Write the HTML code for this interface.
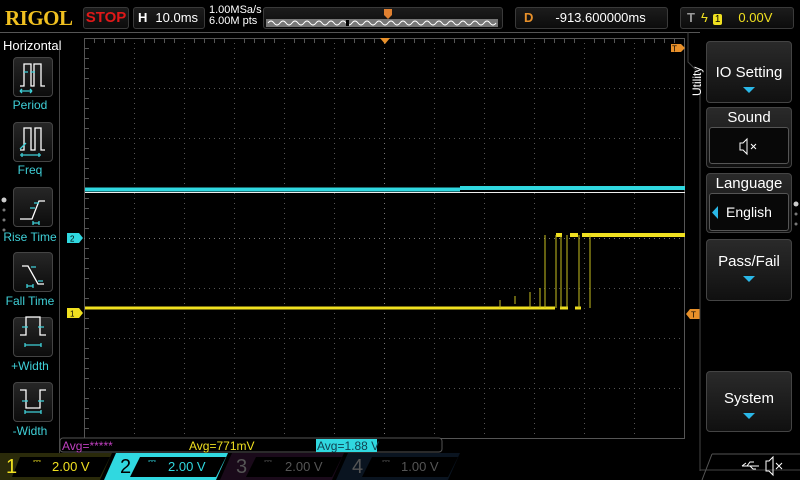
<!DOCTYPE html>
<html><head><meta charset="utf-8"><style>
*{margin:0;padding:0;box-sizing:border-box}
body{width:800px;height:480px;background:#000;overflow:hidden;position:relative;font-family:"Liberation Sans",sans-serif;color:#fff}
.a{position:absolute}
.box{position:absolute;border:1px solid #3a3a3a;border-radius:3px;background:linear-gradient(#1c1c1c,#0c0c0c)}
.lb{position:absolute;color:#3fd0d8;font-size:12px;width:60px;text-align:center;left:0}
.btn{position:absolute;left:13px;width:40px;height:40px;border:1px solid #444;border-radius:4px;background:linear-gradient(#262626,#0c0c0c)}
.rb{position:absolute;left:706px;width:86px;border:1px solid #444;border-radius:4px;background:linear-gradient(#2a2a2a,#101010);text-align:center;font-size:15px}
.tri{width:0;height:0;border-left:6px solid transparent;border-right:6px solid transparent;border-top:6px solid #2ab8e8;margin:6px auto 0}
</style></head><body>
<div class="a" style="left:5px;top:6px;font-family:'Liberation Serif',serif;font-weight:bold;font-size:21px;color:#f0c020;letter-spacing:-0.5px">RIGOL</div>
<div class="box" style="left:83px;top:7px;width:46px;height:22px;color:#e01818;font-weight:bold;font-size:15px;text-align:center;line-height:20px">STOP</div>
<div class="box" style="left:133px;top:7px;width:72px;height:22px;font-size:13px;line-height:20px"><b style="margin-left:4px">H</b><span style="margin-left:8px">10.0ms</span></div>
<div class="a" style="left:209px;top:5px;font-size:11px;line-height:11px">1.00MSa/s<br>6.00M pts</div>
<div class="box" style="left:263px;top:7px;width:240px;height:22px;"></div>
<svg class="a" style="left:266px;top:8px" width="236" height="20"><path d="M118 1h8v6l-4 4-4-4z" fill="#e08030"/><rect x="0" y="11" width="232" height="8" fill="#777"/><path d="M2 15 q3-4 6 0 t6 0 t6 0 t6 0 t6 0 t6 0 t6 0 t6 0 t6 0 t6 0 t6 0 t6 0 t6 0 t6 0 t6 0 t6 0 t6 0 t6 0 t6 0 t6 0 t6 0 t6 0 t6 0 t6 0 t6 0 t6 0 t6 0 t6 0 t6 0 t6 0 t6 0 t6 0 t6 0 t6 0 t6 0 t6 0 t6 0 t6 0" stroke="#fff" fill="none"/><rect x="80" y="12" width="3" height="6" fill="#000"/></svg>
<div class="box" style="left:515px;top:7px;width:153px;height:22px;font-size:13px;line-height:20px"><b style="color:#e8902a;margin-left:8px">D</b><span style="margin-left:22px">-913.600000ms</span></div>
<div class="box" style="left:680px;top:7px;width:114px;height:22px;font-size:13px;line-height:20px"><b style="color:#999;margin-left:6px">T</b><span style="color:#f0e020;margin-left:6px">ϟ</span><span style="background:#f0e020;color:#000;font-size:10px;padding:0 2px;margin-left:5px;border-radius:2px">1</span><span style="color:#f0e020;margin-left:16px">0.00V</span></div>
<div class="a" style="left:0;top:32px;width:700px;height:1px;background:#555"></div>
<div class="a" style="left:3px;top:38px;font-size:13px">Horizontal</div>
<div class="a" style="left:59px;top:50px;width:1px;height:420px;background:#444"></div>
<div class="btn" style="top:57px"></div><div class="lb" style="top:98px">Period</div>
<div class="btn" style="top:122px"></div><div class="lb" style="top:163px">Freq</div>
<div class="btn" style="top:187px"></div><div class="lb" style="top:230px">Rise Time</div>
<div class="btn" style="top:252px"></div><div class="lb" style="top:294px">Fall Time</div>
<div class="btn" style="top:317px"></div><div class="lb" style="top:359px">+Width</div>
<div class="btn" style="top:382px"></div><div class="lb" style="top:424px">-Width</div>
<svg class="a" style="left:0;top:0" width="60" height="440" fill="none" stroke-width="1.3">
<g stroke="#fff"><path d="M20 86h4V64h7v22h3V64h7v22h4"/><path d="M20 150h4v-4 M24 150V128h7v22h4V128h6v22h4"/><path d="M20 219h12l7-18h6"/><path d="M22 266h6l10 18h6"/><path d="M20 335h6v-18h14v18h6"/><path d="M20 390h6v18h14v-18h6"/></g>
<g stroke="#3fd0d8"><path d="M20 91h12M20 91l2-2M20 91l2 2M32 91l-2-2M32 91l-2 2M24 72h4M31 72h4"/><path d="M20 155h21M22 153v4M39 153v4 M20 149l6-6"/><path d="M33 223h6M33 221v4M39 221v4M30 208h5M34 203h5"/><path d="M27 286h6M27 284v4M33 284v4M31 267h5M38 281h5"/><path d="M25 345h16M25 343v4M41 343v4M22 327h6M38 327h6"/><path d="M25 412h16M25 410v4M41 410v4M22 401h6M38 401h6"/></g>
<circle cx="4" cy="200" r="2.5" fill="#ccc"/><circle cx="4" cy="210" r="1.5" fill="#777"/><circle cx="4" cy="220" r="1.5" fill="#777"/><circle cx="4" cy="230" r="1.5" fill="#777"/>
</svg>
<svg class="a" style="left:0;top:0" width="800" height="480">
<rect x="84.5" y="38.5" width="600" height="400" fill="none" stroke="#555"/>
<g stroke="#555" stroke-dasharray="1,4">
<path d="M134.5 38v400M184.5 38v400M234.5 38v400M284.5 38v400M334.5 38v400M434.5 38v400M484.5 38v400M534.5 38v400M584.5 38v400M634.5 38v400"/>
<path d="M84 88.5h600M84 138.5h600M84 188.5h600M84 288.5h600M84 338.5h600M84 388.5h600"/>
<path d="M384.5 38v400M84 238.5h600" stroke="#777"/>
</g>
<g stroke="#555">
<path d="M94.5 38v5M104.5 38v5M114.5 38v5M124.5 38v5M144.5 38v5M154.5 38v5M164.5 38v5M174.5 38v5M194.5 38v5M204.5 38v5M214.5 38v5M224.5 38v5M244.5 38v5M254.5 38v5M264.5 38v5M274.5 38v5M294.5 38v5M304.5 38v5M314.5 38v5M324.5 38v5M344.5 38v5M354.5 38v5M364.5 38v5M374.5 38v5M394.5 38v5M404.5 38v5M414.5 38v5M424.5 38v5M444.5 38v5M454.5 38v5M464.5 38v5M474.5 38v5M494.5 38v5M504.5 38v5M514.5 38v5M524.5 38v5M544.5 38v5M554.5 38v5M564.5 38v5M574.5 38v5M594.5 38v5M604.5 38v5M614.5 38v5M624.5 38v5M644.5 38v5M654.5 38v5M664.5 38v5M674.5 38v5"/>
<path d="M84 48.5h5M84 58.5h5M84 68.5h5M84 78.5h5M84 98.5h5M84 108.5h5M84 118.5h5M84 128.5h5M84 148.5h5M84 158.5h5M84 168.5h5M84 178.5h5M84 198.5h5M84 208.5h5M84 218.5h5M84 228.5h5M84 248.5h5M84 258.5h5M84 268.5h5M84 278.5h5M84 298.5h5M84 308.5h5M84 318.5h5M84 328.5h5M84 348.5h5M84 358.5h5M84 368.5h5M84 378.5h5M84 398.5h5M84 408.5h5M84 418.5h5M84 428.5h5"/>
</g>
<path d="M85 189.5h375 M460 188h225" stroke="#30d8e0" stroke-width="4"/>
<path d="M85 192.5h600" stroke="#eee" stroke-width="1"/>
<path d="M85 308h470M560 308h8M575 308h6" stroke="#f0e020" stroke-width="3"/>
<path d="M556 235h6M570 235h8M582 235h103" stroke="#f0e020" stroke-width="4"/>
<g stroke="#c8c020" stroke-width="1"><path d="M545 308V235M556 308V235M561 308V235M567 308V235M579 308V235M590 308V235"/><path d="M500 300v8M515 296v8M530 292v16M540 288v20"/></g>
<path d="M380 38h10l-5 6z" fill="#e8902a"/>
<path d="M671 44h10l4 4-4 4h-10z" fill="#e8902a"/><text x="672" y="51.5" font-size="8" fill="#000" font-family="Liberation Sans">T</text>
<path d="M700 309h-10l-4 5 4 5h10z" fill="#e8902a"/><text x="691" y="317.5" font-size="8" fill="#000" font-family="Liberation Sans">T</text>
<path d="M67 233h12l4 5-4 5h-12z" fill="#30d8e0"/><text x="70" y="241.5" font-size="8" fill="#000" font-family="Liberation Sans">2</text>
<path d="M67 308h12l4 5-4 5h-12z" fill="#f0e020"/><text x="70" y="316.5" font-size="8" fill="#000" font-family="Liberation Sans">1</text>
<path d="M688 32v30l12 12v397" stroke="#444" fill="none"/>
<path d="M700 470h100" stroke="#444"/>
<circle cx="796" cy="204" r="2.5" fill="#ccc"/><circle cx="796" cy="214" r="1.5" fill="#777"/><circle cx="796" cy="224" r="1.5" fill="#777"/>
<rect x="60" y="438" width="382" height="14" rx="3" fill="#000" stroke="#555"/>
<rect x="316" y="439" width="61" height="13" fill="#30d8e0"/>
<path d="M0 453h112l-12 27H0z" fill="#2a2a0a"/>
<path d="M20 457h90l-10 20H12z" fill="#000"/>
<path d="M116 453h112l-12 27H104z" fill="#30d8e0"/>
<path d="M140 457h86l-10 20H130z" fill="#000"/>
<path d="M232 453h112l-12 27H220z" fill="#1a0a1a"/>
<path d="M256 457h86l-10 20H246z" fill="#000"/>
<path d="M348 453h112l-12 27H336z" fill="#0a1420"/>
<path d="M372 457h86l-10 20H362z" fill="#000"/>
<path d="M712 454h88M712 454l-10 26" stroke="#555" fill="none"/>
<g stroke="#fff" fill="none"><path d="M742 466h17M742 466l4-3M747 466l3-4h4M750 466l3 3h3"/><path d="M766 461h3l4-4v18l-4-4h-3z"/><path d="M776 463l6 6M782 463l-6 6"/></g>
</svg>
<div class="a" style="left:690px;top:96px;transform:rotate(-90deg);transform-origin:left top;font-size:12px">Utility</div>
<div class="rb" style="top:41px;height:62px;padding-top:22px">IO Setting<div class="tri"></div></div>
<div class="rb" style="top:107px;height:61px;font-size:15px;padding-top:1px">Sound<div style="position:absolute;left:2px;top:19px;width:80px;height:37px;border:1px solid #555;border-radius:3px;background:#080808"><svg width="80" height="36" style="position:absolute;left:0;top:0"><g stroke="#fff" fill="none"><path d="M30 15h3l4-4v15l-4-4h-3z"/><path d="M41 16l5 5M46 16l-5 5"/></g></svg></div></div>
<div class="rb" style="top:173px;height:60px;padding-top:1px">Language<div style="position:absolute;left:2px;top:19px;width:80px;height:38px;border:1px solid #555;border-radius:3px;background:#080808;font-size:14px;line-height:36px">English<svg width="8" height="14" style="position:absolute;left:2px;top:12px"><path d="M6 0v13L0 6.5z" fill="#2ab8e8"/></svg></div></div>
<div class="rb" style="top:239px;height:62px;padding-top:13px">Pass/Fail<div class="tri"></div></div>
<div class="rb" style="top:371px;height:61px;padding-top:18px">System<div class="tri"></div></div>
<div class="a" style="left:62px;top:439px;font-size:12px;color:#c040c0">Avg=*****</div>
<div class="a" style="left:189px;top:439px;font-size:12px;color:#f0e020">Avg=771mV</div>
<div class="a" style="left:317px;top:439px;font-size:12px;color:#104050">Avg=1.88 V</div>
<div class="a" style="left:6px;top:456px;font-size:20px;color:#f0e020">1</div>
<div class="a" style="left:33px;top:456px;font-size:10px;color:#f0e020">⎓</div>
<div class="a" style="left:52px;top:459px;font-size:13px;color:#f0e020">2.00 V</div>
<div class="a" style="left:120px;top:456px;font-size:20px;color:#000">2</div>
<div class="a" style="left:148px;top:456px;font-size:10px;color:#30d8e0">⎓</div>
<div class="a" style="left:168px;top:459px;font-size:13px;color:#30d8e0">2.00 V</div>
<div class="a" style="left:236px;top:456px;font-size:20px;color:#555">3</div>
<div class="a" style="left:264px;top:456px;font-size:10px;color:#555">⎓</div>
<div class="a" style="left:285px;top:459px;font-size:13px;color:#555">2.00 V</div>
<div class="a" style="left:352px;top:456px;font-size:20px;color:#555">4</div>
<div class="a" style="left:382px;top:456px;font-size:10px;color:#555">⎓</div>
<div class="a" style="left:401px;top:459px;font-size:13px;color:#555">1.00 V</div>
</body></html>
